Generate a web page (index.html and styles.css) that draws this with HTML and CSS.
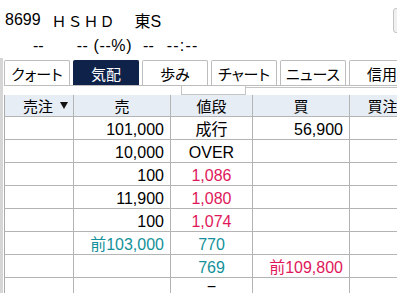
FILE: index.html
```html
<!DOCTYPE html>
<html lang="ja">
<head>
  <meta charset="UTF-8" />
  <title>気配</title>
  <link rel="stylesheet" href="styles.css">
</head>
<body>

  <!-- 銘柄ヘッダ -->
  <div class="head">
    <div class="title">
      <span class="code">8699</span>
      <span class="name">ＨＳＨＤ</span>
      <span class="market">東S</span>
      <span class="menuBtn"></span>
    </div>
    <div class="quote">
      <span class="q1">--</span>
      <span class="q2">-- (--%)</span>
      <span class="q3">--</span>
      <span class="q4">--:--</span>
    </div>
  </div>

  <div class="frame">
    <!-- タブ -->
    <div class="tabs">
      <div class="tab">クォート</div>
      <div class="tab active">気配</div>
      <div class="tab">歩み</div>
      <div class="tab">チャート</div>
      <div class="tab">ニュース</div>
      <div class="tab">信用</div>
    </div>

    <div class="strip">
      <div class="s1"></div>
      <div class="s2"></div>
      <div class="s3"></div>
    </div>

    <!-- 板 -->
    <table class="board">
      <colgroup>
        <col class="c1"><col class="c2"><col class="c3"><col class="c4"><col class="c5">
      </colgroup>
      <thead>
        <tr>
          <th class="sellOrder">売注<span class="tri"></span></th>
          <th>売</th>
          <th>値段</th>
          <th>買</th>
          <th>買注</th>
        </tr>
      </thead>
      <tbody>
        <tr><td></td><td class="r">101,000</td><td class="c">成行</td><td class="r">56,900</td><td></td></tr>
        <tr><td></td><td class="r">10,000</td><td class="c">OVER</td><td></td><td></td></tr>
        <tr><td></td><td class="r">100</td><td class="c red">1,086</td><td></td><td></td></tr>
        <tr><td></td><td class="r">11,900</td><td class="c red">1,080</td><td></td><td></td></tr>
        <tr><td></td><td class="r">100</td><td class="c red">1,074</td><td></td><td></td></tr>
        <tr><td></td><td class="r teal">前103,000</td><td class="c teal">770</td><td></td><td></td></tr>
        <tr><td></td><td></td><td class="c teal">769</td><td class="r red">前109,800</td><td></td></tr>
        <tr class="last"><td></td><td></td><td class="c">−</td><td></td><td></td></tr>
      </tbody>
    </table>
  </div>

</body>
</html>
```

FILE: styles.css
```css
html, body {
  margin: 0;
  padding: 0;
  width: 100%;
  height: 100%;
  overflow: hidden;
  background: #fff;
  color: #000;
  font-family: "Liberation Sans", Arial, "Noto Sans CJK JP", sans-serif;
  font-size: 16px;
}

/* 銘柄ヘッダ */
.head {
  height: 58px;
}

.title {
  display: flex;
  align-items: center;
  height: 36px;
  padding-top: 2px;
  padding-left: 5px;
  white-space: nowrap;
}

.title .name {
  margin-left: 11px;
  font-family: "Noto Sans CJK JP", sans-serif;
  font-size: 15px;
  letter-spacing: 1px;
}

.title .market {
  margin-left: 19px;
}

.menuBtn {
  width: 20px;
  height: 25px;
  margin-left: auto;
  margin-right: -16px;
  box-sizing: border-box;
  border: 1px solid #c4c4c4;
  border-radius: 3px;
  background: #f0f0f0;
}

.quote {
  display: flex;
  height: 16px;
  align-items: center;
  white-space: nowrap;
}

.quote .q1 { margin-left: 33px; }
.quote .q2 { margin-left: 33px; letter-spacing: 0.6px; }
.quote .q3 { margin-left: 11px; }
.quote .q4 { margin-left: 13px; letter-spacing: 1.2px; }

/* 枠 */
.frame {
  border-left: 3px solid #d6d6d6;
  padding-left: 1px;
  height: 240px;
}

.tabs {
  display: flex;
  gap: 3px;
  height: 27px;
  padding-top: 2px;
  box-sizing: border-box;
  white-space: nowrap;
}

.tab {
  flex: 0 0 66px;
  box-sizing: border-box;
  border: 1px solid #bdbdbd;
  border-bottom: none;
  border-radius: 2px 2px 0 0;
  display: flex;
  justify-content: center;
  align-items: center;
  font-family: "Noto Sans CJK JP", sans-serif;
  font-size: 15px;
  font-feature-settings: "palt";
  background: #fff;
}

.tab.active {
  background: #0f2249;
  border-color: #0f2249;
  color: #fff;
}

.strip {
  display: flex;
  height: 10px;
  border-top: 1px solid #bdbdbd;
  box-sizing: border-box;
}

.strip .s1 {
  width: 177px;
  border-right: 1px solid #c4c4c4;
}

.strip .s2 {
  width: 63px;
  border-right: 1px solid #c4c4c4;
  border-bottom: 1px solid #c4c4c4;
}

.strip .s3 {
  flex: 1;
  margin-top: 1px;
  border-top: 1px solid #c4c4c4;
}

/* 板 */
.board {
  border-collapse: collapse;
  table-layout: fixed;
  width: 411px;
  border-left: 1px solid #aaaaaa;
}

.board .c1 { width: 69px; }
.board .c2 { width: 97px; }
.board .c3 { width: 82px; }
.board .c4 { width: 97px; }
.board .c5 { width: 66px; }

.board th {
  height: 21px;
  padding: 0;
  line-height: 18px;
  background: #e7edf5;
  font-family: "Noto Sans CJK JP", sans-serif;
  font-size: 15px;
  font-weight: normal;
  border-right: 1px solid #b4b4b4;
  border-bottom: 1px solid #b4b4b4;
  text-align: center;
  white-space: nowrap;
}

.board th.sellOrder {
  text-align: right;
  padding-right: 5px;
}

.board .tri {
  display: inline-block;
  width: 0;
  height: 0;
  margin-left: 7px;
  border-left: 4px solid transparent;
  border-right: 4px solid transparent;
  border-top: 7px solid #111;
  vertical-align: 3px;
}

.board td {
  height: 17.6px;
  padding: 4px 6px 0 0;
  line-height: 18px;
  border-right: 1px solid #b4b4b4;
  border-bottom: 1px solid #b4b4b4;
  white-space: nowrap;
}

.board td.r { text-align: right; }
.board td.c { text-align: center; padding: 4px 0 0; }

.board tr.last td {
  vertical-align: top;
  padding-top: 0;
}

.red { color: #e0185a; }
.teal { color: #14919a; }
```
